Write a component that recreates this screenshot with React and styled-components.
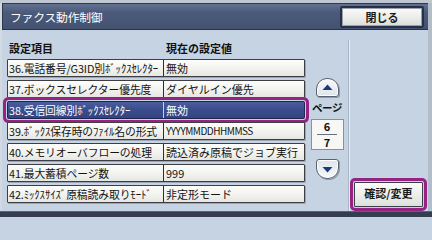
import React from "react";
import styled, { createGlobalStyle, css } from "styled-components";

const Global = createGlobalStyle`
  html, body { margin: 0; padding: 0; background: #c6d3e3; }
  * { box-sizing: border-box; }
`;

const FONT = `"Noto Sans CJK JP", "Noto Sans", sans-serif`;

const Screen = styled.div`
  width: 432px;
  height: 217px;
  display: flex;
  flex-direction: column;
  border-top: 3px solid #bfc7d2;
  background: #c6d3e3;
  font-family: ${FONT};
  color: #111;
  overflow: hidden;
`;

const Main = styled.div`
  flex: 1;
  display: flex;
  flex-direction: column;
  border-left: 2px solid #d3d9e1;
  border-right: 4px solid #b3bcc9;
`;

const TitleBar = styled.div`
  height: 27px;
  display: flex;
  align-items: center;
  justify-content: space-between;
  padding: 0 4px 0 7px;
  background: linear-gradient(#63718f 0%, #4b5a7a 35%, #44526f 100%);
  border-top: 1px solid #2f3850;
  border-left: 1px solid #2f3850;
  border-bottom: 1px solid #2a3247;
`;

const Title = styled.div`
  color: #ffffff;
  font-size: 11.8px;
  letter-spacing: -0.2px;
  line-height: 1;
  padding-top: 1px;
`;

const CloseButton = styled.button`
  width: 84px;
  height: 22px;
  margin-top: 1px;
  padding: 0 0 1px 0;
  font-family: ${FONT};
  font-size: 11px;
  font-weight: 700;
  color: #1a1a1a;
  background: linear-gradient(#fbfbfa, #e9ebe8 60%, #d9dcd8);
  border: 2px solid #273049;
  border-radius: 2px;
  box-shadow: inset 0 0 0 1px #9aa1ad;
`;

const Body = styled.div`
  height: 181px;
  display: flex;
`;

const ListColumn = styled.div`
  width: 303px;
  padding: 10px 0 0 5px;
  display: flex;
  flex-direction: column;
`;

const Header = styled.div`
  height: 16px;
  margin-bottom: 3px;
  display: grid;
  grid-template-columns: 157px 1fr;
  align-items: center;
  font-size: 11px;
  font-weight: 700;
  line-height: 1;
`;

const HeaderCell = styled.div`
  padding-left: 2px;
`;

const Rows = styled.div`
  display: grid;
  grid-auto-rows: 18px;
  row-gap: 3px;
`;

const Row = styled.div`
  width: 298px;
  display: grid;
  grid-template-columns: 156px 1fr;
  align-items: stretch;
  border: 1px solid #3e3e42;
  border-radius: 1px;
  font-size: 11px;
  line-height: 16px;
  white-space: nowrap;
  ${(p) =>
    p.$selected
      ? css`
          background: linear-gradient(#4a5d9c, #3a4c8b 50%, #33447f);
          color: #ffffff;
          border-color: #1e2650;
          box-shadow: 0 0 0 1px #c6d3e3, 0 0 0 4px #962384;
          border-radius: 2px;
        `
      : css`
          background: linear-gradient(#fdfdfb, #f1f1ed 60%, #e6e6e2);
          color: #141414;
          box-shadow: 1px 1px 0 #9aa6b6;
        `}
`;

const LabelCell = styled.div`
  padding-left: 1px;
  border-right: 1px solid ${(p) => (p.$selected ? "#c8d0e8" : "#2e2e30")};
  font-size: 10.8px;
  letter-spacing: -0.1px;
  overflow: hidden;
`;

const ValueCell = styled.div`
  padding-left: 2px;
  overflow: hidden;
  ${(p) =>
    p.$latin &&
    css`
      font-size: 10px;
      letter-spacing: -0.5px;
    `}
`;

const NavColumn = styled.div`
  width: 44px;
  padding-top: 48px;
  display: flex;
  flex-direction: column;
  align-items: center;
`;

const ArrowButton = styled.button`
  width: 23px;
  height: ${(p) => (p.$down ? "20px" : "19px")};
  padding: 0;
  display: flex;
  align-items: center;
  justify-content: center;
  border: 1px solid #5c6270;
  border-radius: ${(p) => (p.$down ? "3px 3px 11px 11px" : "11px 11px 3px 3px")};
  background: ${(p) =>
    p.$down
      ? "linear-gradient(#dfe5ec, #f7f9fb)"
      : "linear-gradient(#f7f9fb, #dfe5ec)"};
  box-shadow: inset 0 0 0 1px #ffffff, 1px 1px 0 #8f9aab;
  margin-top: ${(p) => (p.$down ? "9px" : "0")};
`;

const PageLabel = styled.div`
  margin-top: 3px;
  height: 15px;
  font-size: 10.5px;
  font-weight: 700;
  line-height: 15px;
  letter-spacing: -0.5px;
  white-space: nowrap;
`;

const PageBox = styled.div`
  margin-top: 4px;
  width: 33px;
  height: 31px;
  display: flex;
  flex-direction: column;
  align-items: center;
  justify-content: center;
  background: #f7f7f5;
  border: 1px solid #8a8f98;
  font-size: 11px;
  font-weight: 700;
  line-height: 13px;
`;

const PageRule = styled.div`
  width: 20px;
  height: 1px;
  margin: 1px 0;
  background: #6b6f78;
`;

const SideColumn = styled.div`
  flex: 1;
  margin-top: 10px;
  border-left: 1px solid #e6ecf3;
  box-shadow: -1px 0 0 #a9b6c8;
  display: flex;
  flex-direction: column;
  justify-content: flex-end;
`;

const ConfirmRing = styled.div`
  width: 77px;
  height: 33px;
  border: 3px solid #962384;
  border-radius: 5px;
  padding: 1px;
  background: #c6d3e3;
`;

const ConfirmButton = styled.button`
  width: 100%;
  height: 100%;
  padding: 2px 0 0 0;
  display: flex;
  justify-content: center;
  align-items: flex-start;
  font-family: ${FONT};
  font-size: 11px;
  font-weight: 700;
  color: #1a1a1a;
  background: linear-gradient(#fbfbfa, #eceee9 55%, #dcdfda);
  border: 1px solid #3a3f4a;
  border-radius: 1px;
`;

const Footer = styled.div`
  height: 6px;
  background: #353d50;
  border-top: 1px solid #5c6578;
`;

const Up = () => (
  <svg width="11" height="7" viewBox="0 0 11 7">
    <polygon points="5.5,0.5 10.5,6 0.5,6" fill="#1d3a72" />
  </svg>
);
const Down = () => (
  <svg width="11" height="7" viewBox="0 0 11 7">
    <polygon points="0.5,1 10.5,1 5.5,6.5" fill="#1d3a72" />
  </svg>
);

const rows = [
  { label: "36.電話番号/G3ID別ﾎﾞｯｸｽｾﾚｸﾀｰ", value: "無効" },
  { label: "37.ボックスセレクター優先度", value: "ダイヤルイン優先" },
  { label: "38.受信回線別ﾎﾞｯｸｽｾﾚｸﾀｰ", value: "無効", selected: true },
  { label: "39.ﾎﾞｯｸｽ保存時のﾌｧｲﾙ名の形式", value: "YYYYMMDDHHMMSS", latin: true },
  { label: "40.メモリオーバフローの処理", value: "読込済み原稿でジョブ実行" },
  { label: "41.最大蓄積ページ数", value: "999" },
  { label: "42.ﾐｯｸｽｻｲｽﾞ原稿読み取りﾓｰﾄﾞ", value: "非定形モード" },
];

export default function App() {
  return (
    <>
      <Global />
      <Screen>
        <Main>
          <TitleBar>
            <Title>ファクス動作制御</Title>
            <CloseButton>閉じる</CloseButton>
          </TitleBar>
          <Body>
            <ListColumn>
              <Header>
                <HeaderCell>設定項目</HeaderCell>
                <HeaderCell>現在の設定値</HeaderCell>
              </Header>
              <Rows>
                {rows.map((r) => (
                  <Row key={r.label} $selected={r.selected}>
                    <LabelCell $selected={r.selected}>{r.label}</LabelCell>
                    <ValueCell $latin={r.latin}>{r.value}</ValueCell>
                  </Row>
                ))}
              </Rows>
            </ListColumn>
            <NavColumn>
              <ArrowButton>
                <Up />
              </ArrowButton>
              <PageLabel>ページ</PageLabel>
              <PageBox>
                <span>6</span>
                <PageRule />
                <span>7</span>
              </PageBox>
              <ArrowButton $down>
                <Down />
              </ArrowButton>
            </NavColumn>
            <SideColumn>
              <ConfirmRing>
                <ConfirmButton>確認/変更</ConfirmButton>
              </ConfirmRing>
            </SideColumn>
          </Body>
        </Main>
        <Footer />
      </Screen>
    </>
  );
}
